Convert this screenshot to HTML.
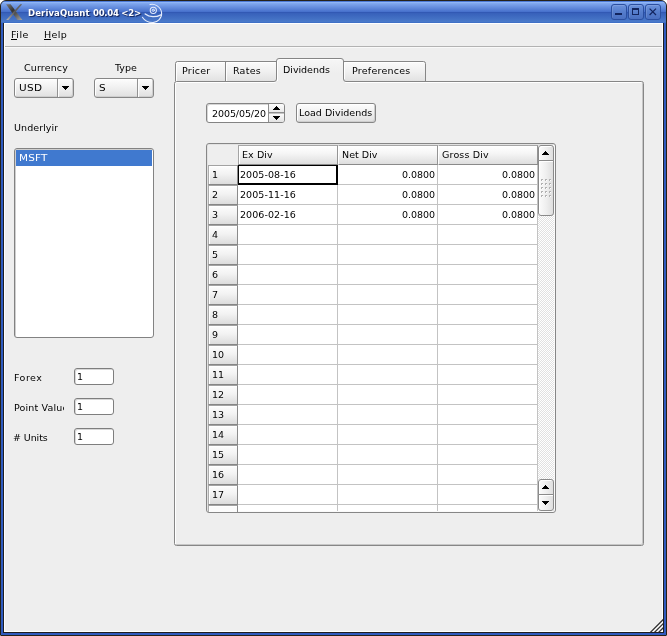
<!DOCTYPE html>
<html>
<head>
<meta charset="utf-8">
<title>DerivaQuant 00.04</title>
<style>
html,body{margin:0;padding:0;background:#fff;}
body{width:667px;height:636px;position:relative;overflow:hidden;will-change:transform;font-family:"DejaVu Sans","Liberation Sans",sans-serif;font-size:10px;color:#000;}
.a{position:absolute;}
.t{position:absolute;white-space:nowrap;line-height:12px;height:12px;font-size:9.5px;}
.tb{font-weight:bold;font-family:"DejaVu Sans Condensed","DejaVu Sans","Liberation Sans",sans-serif;}
#win{position:absolute;left:0;top:0;width:665px;height:634px;border:1px solid #26221a;border-radius:6px 6px 1px 1px;background:#2f5bbf;overflow:hidden;}
#title{position:absolute;left:0;top:0;width:665px;height:22px;background:linear-gradient(to bottom,#4c7ad6 0px,#4c7ad6 1px,#8fb5f6 1px,#8fb5f6 2px,#83aaf0 2px,#456fcb 11px,#3259b4 11px,#3259b4 12px,#3760ba 12px,#4a7aca 21px,#3f70c6 21px,#3f70c6 22px);}
#inner{position:absolute;left:2px;top:22px;width:659px;height:609px;border:1px solid #1e1e22;border-top:none;background:#fff;}
#client{position:absolute;left:1px;top:1px;width:657px;height:607px;background:#eeeeee;}
.wb{position:absolute;top:3px;width:14px;height:14px;border:1px solid #2b4fa0;border-radius:3px;background:linear-gradient(to bottom,#6c92dc 0,#557dcc 50%,#4a70c2 100%);box-shadow:inset 1px 1px 0 rgba(255,255,255,.12);}
.btn{position:absolute;border:1px solid #868686;border-radius:3px;background:linear-gradient(to bottom,#fdfdfd 0,#f1f1f1 45%,#e0e0e0 100%);box-shadow:inset 1px 1px 0 #fff,inset -1px -1px 0 #cecece;}
.dv{position:absolute;top:0;width:1px;background:#929292;}
.dvw{position:absolute;top:0;width:1px;background:#fdfdfd;}
.edit{position:absolute;width:38px;height:15px;border:1px solid #7e7e7e;border-radius:3px;background:#fff;box-shadow:inset 1px 1px 0 #d8d8d8;}
.tabf{position:absolute;top:62px;height:19px;background:linear-gradient(to bottom,#fafafa 0,#f0f0f0 50%,#e2e2e2 100%);}
.hc{position:absolute;top:145px;height:18px;width:98px;border-top:1px solid #a6a6a6;border-bottom:1px solid #8a8a8a;border-right:1px solid #949494;border-left:1px solid #fff;background:linear-gradient(to bottom,#ffffff 0,#f6f6f6 40%,#dedede 100%);box-shadow:inset 0 1px 0 #fff;}
.rh{position:absolute;left:208px;width:28px;height:18px;border-top:1px solid #a2a2a2;border-left:1px solid #acacac;border-bottom:1px solid #868686;border-right:1px solid #8a8a8a;background:linear-gradient(to bottom,#fdfdfd 0,#f2f2f2 45%,#dcdcdc 100%);box-shadow:inset 1px 1px 0 #fff;}
.gl{position:absolute;background:#c3c3c3;}
.sb{position:absolute;left:538px;width:14px;border:1px solid #8a8a8a;border-radius:3px;background:linear-gradient(to right,#fbfbfb 0,#efefef 50%,#dfdfdf 100%);box-shadow:inset 1px 1px 0 #fff;}
</style>
</head>
<body>
<div id="win">
 <div id="title"></div>
 <svg class="a" style="left:4px;top:2px" width="20" height="19" viewBox="0 0 20 19">
  <defs><linearGradient id="xg" x1="0" y1="0" x2="1" y2="1"><stop offset="0" stop-color="#7c7c7c"/><stop offset="0.4" stop-color="#353535"/><stop offset="0.62" stop-color="#585858"/><stop offset="1" stop-color="#a4a4a4"/></linearGradient>
  <linearGradient id="xg2" x1="0" y1="1" x2="1" y2="0"><stop offset="0" stop-color="#b4b4b4"/><stop offset="0.5" stop-color="#5a5a5a"/><stop offset="1" stop-color="#666"/></linearGradient></defs>
  <polygon points="1.0,1.2 5.6,1.2 17.4,16.9 12.4,16.9" fill="url(#xg)"/>
  <polygon points="15.2,1.2 17.2,1.2 3.6,16.9 1.2,16.9" fill="url(#xg2)"/>
 </svg>
 <svg class="a" style="left:139px;top:-1px" width="28" height="26" viewBox="0 0 28 26" fill="none" stroke="#e4ebfb" stroke-linecap="round">
  <circle cx="13.3" cy="10.3" r="1.1" stroke-width="1"/>
  <circle cx="13.3" cy="10.3" r="3.1" stroke-width="1.05"/>
  <path d="M10 4.6 C14.5 3.4 20.8 6.4 21.6 12.6 C22.2 18 17.6 22.8 12.6 22.6 C7.8 22.4 4.2 20 2.4 17.2" stroke-width="1.05"/>
  <path d="M5.2 14 C9.5 17.4 16 17.2 21 14.8" stroke-width="1.45"/>
 </svg>
 <div class="wb" style="left:610px"><div class="a" style="left:3px;top:8px;width:7px;height:2px;background:#13255f"></div></div>
 <div class="wb" style="left:627px"><div class="a" style="left:3px;top:3px;width:5px;height:4px;border:1px solid #13255f;border-top-width:2px"></div></div>
 <div class="wb" style="left:644px"><svg class="a" style="left:3px;top:3px" width="8" height="8" viewBox="0 0 8 8"><path d="M0.6 0.6 L7 7 M7 0.6 L0.6 7" stroke="#13255f" stroke-width="1.25"/></svg></div>
 <div id="inner"><div id="client"></div></div>
</div>
<!-- resize grip -->
<svg class="a" style="left:649px;top:618px" width="14" height="14" viewBox="0 0 14 14">
 <polygon points="0.2,14 14,0.2 14,14" fill="#fff"/>
 <g stroke="#343434" stroke-width="1.35"><path d="M0.8 15 L15 0.8 M4.9 15 L15 4.9 M9 15 L15 9"/></g>
</svg>
<!-- menubar separator -->
<div class="a" style="left:5px;top:46px;width:657px;height:1px;background:#b2b2b2"></div>
<div class="a" style="left:5px;top:47px;width:657px;height:1px;background:#f9f9f9"></div>

<div class="a" style="left:11px;top:39px;width:6px;height:1px;background:#000"></div>
<div class="a" style="left:44px;top:39px;width:7px;height:1px;background:#000"></div>
<!-- combo boxes -->
<div class="btn" style="left:14px;top:78px;width:58px;height:18px"><div class="dv" style="left:42px;height:18px"></div><div class="dvw" style="left:43px;height:18px"></div>
 <svg class="a" style="left:47px;top:7px" width="7" height="4" viewBox="0 0 7 4" shape-rendering="crispEdges"><path d="M0 0H7V1H6V2H5V3H4V4H3V3H2V2H1V1H0Z" fill="#000"/></svg></div>
<div class="btn" style="left:94px;top:78px;width:58px;height:18px"><div class="dv" style="left:42px;height:18px"></div><div class="dvw" style="left:43px;height:18px"></div>
 <svg class="a" style="left:47px;top:7px" width="7" height="4" viewBox="0 0 7 4" shape-rendering="crispEdges"><path d="M0 0H7V1H6V2H5V3H4V4H3V3H2V2H1V1H0Z" fill="#000"/></svg></div>

<!-- list box -->
<div class="a" style="left:14px;top:148px;width:138px;height:188px;border:1px solid #828282;border-radius:3px;background:#fff;box-shadow:inset 1px 1px 0 #cfcfcf">
 <div class="a" style="left:1px;top:1px;width:136px;height:16px;background:#4079cf"></div>
</div>

<!-- line edits -->
<div class="edit" style="left:74px;top:368px"></div>
<div class="edit" style="left:74px;top:398px"></div>
<div class="edit" style="left:74px;top:428px"></div>

<!-- tab fills -->
<div class="tabf" style="left:176px;width:49px;border-radius:2px 0 0 0"></div>
<div class="tabf" style="left:226px;width:50px"></div>
<div class="tabf" style="left:344px;width:81px;border-radius:0 2px 0 0"></div>
<div class="a" style="left:277px;top:59px;width:66px;height:24px;background:linear-gradient(to bottom,#f6f6f6 0,#eeeeee 60%)"></div>
<svg class="a" style="left:0;top:0" width="667" height="636" viewBox="0 0 667 636" fill="none">
 <g stroke="#fff" stroke-width="1">
  <path d="M177 62.5 H225 M227 62.5 H275 M345 62.5 H423 M176.5 63 V81 M226.5 63 V81 M344.5 63 V79"/>
  <path d="M277.5 81 V61.5 Q277.5 59.5 279.5 59.5 H341"/>
  <path d="M175.5 544 V83.5 Q175.5 82.5 176.5 82.5 H275.5 M345 82.5 H641"/>
 </g>
 <path d="M642.5 83 V543 Q642.5 544.5 641 544.5 H176" stroke="#c6c6c6" stroke-width="1"/>
 <g stroke="#868686" stroke-width="1">
  <path d="M175.5 81 V63.5 Q175.5 61.5 177.5 61.5 H276 M225.5 62 V81 M344 61.5 H423.5 Q425.5 61.5 425.5 63.5 V81"/>
  <path d="M174.5 543.5 V83.5 Q174.5 81.5 176.5 81.5 H274 Q276.5 81.5 276.5 79 V61 Q276.5 58.5 279 58.5 H341 Q343.5 58.5 343.5 61 V79 Q343.5 81.5 346 81.5 H641.5 Q643.5 81.5 643.5 83.5 V543.5 Q643.5 545.5 641.5 545.5 H176.5 Q174.5 545.5 174.5 543.5 Z"/>
 </g>
</svg>

<!-- spin box -->
<div class="a" style="left:206px;top:103px;width:77px;height:18px;border:1px solid #848484;border-radius:3px;background:#fff;overflow:hidden;box-shadow:inset 1px 1px 0 #d6d6d6">
 <div class="a" style="left:62px;top:0;width:15px;height:9px;background:linear-gradient(to bottom,#fdfdfd,#e6e6e6)"></div>
 <div class="a" style="left:62px;top:10px;width:15px;height:8px;background:linear-gradient(to bottom,#fbfbfb,#e2e2e2)"></div>
 <div class="a" style="left:61px;top:0;width:1px;height:18px;background:#8e8e8e"></div>
 <div class="a" style="left:62px;top:8px;width:15px;height:1px;background:#8e8e8e"></div>
 <div class="a" style="left:62px;top:9px;width:15px;height:1px;background:#c4c4c4"></div>
 <svg class="a" style="left:66px;top:2px" width="7" height="4" viewBox="0 0 7 4" shape-rendering="crispEdges"><path d="M3 0H4V1H5V2H6V3H7V4H0V3H1V2H2V1H3Z" fill="#000"/></svg>
 <svg class="a" style="left:66px;top:12px" width="7" height="4" viewBox="0 0 7 4" shape-rendering="crispEdges"><path d="M0 0H7V1H6V2H5V3H4V4H3V3H2V2H1V1H0Z" fill="#000"/></svg>
</div>
<!-- push button -->
<div class="btn" style="left:296px;top:103px;width:78px;height:18px"></div>

<!-- table frame -->
<div class="a" style="left:206px;top:143px;width:348px;height:368px;border:1px solid #868686;border-radius:3px;background:#fff;box-shadow:inset 1px 1px 0 #e2e2e2,inset -1px -1px 0 #fafafa"></div>
<div class="a" style="left:208px;top:145px;width:30px;height:20px;background:#eeeeee"></div>
<div class="hc" style="left:238px;border-left-color:#a4a4a4;box-shadow:inset 1px 1px 0 #fff"></div>
<div class="hc" style="left:338px"></div>
<div class="hc" style="left:438px"></div>
<div class="a" style="left:538px;top:145px;width:16px;height:366px;background:repeating-conic-gradient(#ffffff 0 25%,#e1e1e1 0 50%) 0 0/2px 2px"></div>
<div class="gl" style="left:337px;top:165px;width:1px;height:346px"></div>
<div class="gl" style="left:437px;top:165px;width:1px;height:346px"></div>
<div class="gl" style="left:537px;top:165px;width:1px;height:346px"></div>
<div class="gl" style="left:238px;top:184px;width:300px;height:1px"></div>
<div class="rh" style="top:165px"></div>
<div class="gl" style="left:238px;top:204px;width:300px;height:1px"></div>
<div class="rh" style="top:185px"></div>
<div class="gl" style="left:238px;top:224px;width:300px;height:1px"></div>
<div class="rh" style="top:205px"></div>
<div class="gl" style="left:238px;top:244px;width:300px;height:1px"></div>
<div class="rh" style="top:225px"></div>
<div class="gl" style="left:238px;top:264px;width:300px;height:1px"></div>
<div class="rh" style="top:245px"></div>
<div class="gl" style="left:238px;top:284px;width:300px;height:1px"></div>
<div class="rh" style="top:265px"></div>
<div class="gl" style="left:238px;top:304px;width:300px;height:1px"></div>
<div class="rh" style="top:285px"></div>
<div class="gl" style="left:238px;top:324px;width:300px;height:1px"></div>
<div class="rh" style="top:305px"></div>
<div class="gl" style="left:238px;top:344px;width:300px;height:1px"></div>
<div class="rh" style="top:325px"></div>
<div class="gl" style="left:238px;top:364px;width:300px;height:1px"></div>
<div class="rh" style="top:345px"></div>
<div class="gl" style="left:238px;top:384px;width:300px;height:1px"></div>
<div class="rh" style="top:365px"></div>
<div class="gl" style="left:238px;top:404px;width:300px;height:1px"></div>
<div class="rh" style="top:385px"></div>
<div class="gl" style="left:238px;top:424px;width:300px;height:1px"></div>
<div class="rh" style="top:405px"></div>
<div class="gl" style="left:238px;top:444px;width:300px;height:1px"></div>
<div class="rh" style="top:425px"></div>
<div class="gl" style="left:238px;top:464px;width:300px;height:1px"></div>
<div class="rh" style="top:445px"></div>
<div class="gl" style="left:238px;top:484px;width:300px;height:1px"></div>
<div class="rh" style="top:465px"></div>
<div class="gl" style="left:238px;top:504px;width:300px;height:1px"></div>
<div class="rh" style="top:485px"></div>
<div class="rh" style="top:505px;height:6px;border-bottom:none;background:#fbfbfb"></div>
<div class="a" style="left:238px;top:165px;width:97px;height:17px;border:solid #000;border-width:1px 2px 2px 1px"></div>
<div class="sb" style="top:160px;height:54px;border-radius:0 0 3px 3px"><div class="a" style="left:2px;top:18px;width:2px;height:2px;background:#b2b2b2"></div><div class="a" style="left:3px;top:19px;width:1px;height:1px;background:#fff"></div><div class="a" style="left:2px;top:22px;width:2px;height:2px;background:#b2b2b2"></div><div class="a" style="left:3px;top:23px;width:1px;height:1px;background:#fff"></div><div class="a" style="left:2px;top:26px;width:2px;height:2px;background:#b2b2b2"></div><div class="a" style="left:3px;top:27px;width:1px;height:1px;background:#fff"></div><div class="a" style="left:2px;top:30px;width:2px;height:2px;background:#b2b2b2"></div><div class="a" style="left:3px;top:31px;width:1px;height:1px;background:#fff"></div><div class="a" style="left:2px;top:34px;width:2px;height:2px;background:#b2b2b2"></div><div class="a" style="left:3px;top:35px;width:1px;height:1px;background:#fff"></div><div class="a" style="left:6px;top:18px;width:2px;height:2px;background:#b2b2b2"></div><div class="a" style="left:7px;top:19px;width:1px;height:1px;background:#fff"></div><div class="a" style="left:6px;top:22px;width:2px;height:2px;background:#b2b2b2"></div><div class="a" style="left:7px;top:23px;width:1px;height:1px;background:#fff"></div><div class="a" style="left:6px;top:26px;width:2px;height:2px;background:#b2b2b2"></div><div class="a" style="left:7px;top:27px;width:1px;height:1px;background:#fff"></div><div class="a" style="left:6px;top:30px;width:2px;height:2px;background:#b2b2b2"></div><div class="a" style="left:7px;top:31px;width:1px;height:1px;background:#fff"></div><div class="a" style="left:6px;top:34px;width:2px;height:2px;background:#b2b2b2"></div><div class="a" style="left:7px;top:35px;width:1px;height:1px;background:#fff"></div><div class="a" style="left:10px;top:18px;width:2px;height:2px;background:#b2b2b2"></div><div class="a" style="left:11px;top:19px;width:1px;height:1px;background:#fff"></div><div class="a" style="left:10px;top:22px;width:2px;height:2px;background:#b2b2b2"></div><div class="a" style="left:11px;top:23px;width:1px;height:1px;background:#fff"></div><div class="a" style="left:10px;top:26px;width:2px;height:2px;background:#b2b2b2"></div><div class="a" style="left:11px;top:27px;width:1px;height:1px;background:#fff"></div><div class="a" style="left:10px;top:30px;width:2px;height:2px;background:#b2b2b2"></div><div class="a" style="left:11px;top:31px;width:1px;height:1px;background:#fff"></div><div class="a" style="left:10px;top:34px;width:2px;height:2px;background:#b2b2b2"></div><div class="a" style="left:11px;top:35px;width:1px;height:1px;background:#fff"></div></div>
<div class="sb" style="top:145px;height:14px;border-radius:3px 3px 0 0"><svg class="a" style="left:3px;top:5px" width="7" height="4" viewBox="0 0 7 4" shape-rendering="crispEdges"><path d="M3 0H4V1H5V2H6V3H7V4H0V3H1V2H2V1H3Z" fill="#000"/></svg></div>
<div class="sb" style="top:494px;height:15px;border-radius:0 0 3px 3px"><svg class="a" style="left:3px;top:6px" width="7" height="4" viewBox="0 0 7 4" shape-rendering="crispEdges"><path d="M0 0H7V1H6V2H5V3H4V4H3V3H2V2H1V1H0Z" fill="#000"/></svg></div>
<div class="sb" style="top:479px;height:14px;border-radius:3px 3px 0 0"><svg class="a" style="left:3px;top:5px" width="7" height="4" viewBox="0 0 7 4" shape-rendering="crispEdges"><path d="M3 0H4V1H5V2H6V3H7V4H0V3H1V2H2V1H3Z" fill="#000"/></svg></div>

<!-- text labels -->
<div class="t" id="file" style="left:11px;top:29px;letter-spacing:0.486px;">File</div>
<div class="t" id="help" style="left:44px;top:29px;letter-spacing:0.382px;">Help</div>
<div class="t" id="cur" style="left:24px;top:62px;letter-spacing:0.141px;">Currency</div>
<div class="t" id="type" style="left:115px;top:62px;letter-spacing:-0.022px;">Type</div>
<div class="t" id="usd" style="left:19px;top:82px;letter-spacing:0.362px;transform:scaleX(1.1);transform-origin:0 0;">USD</div>
<div class="t" id="s" style="left:99px;top:82px;transform:scaleX(1.1);transform-origin:0 0;">S</div>
<div class="t" id="und" style="left:14px;top:122px;letter-spacing:0.078px;width:44px;overflow:hidden;">Underlying</div>
<div class="t" id="msft" style="left:19px;top:152px;letter-spacing:0.159px;transform:scaleX(1.1);transform-origin:0 0;color:#fff;">MSFT</div>
<div class="t" id="forex" style="left:14px;top:372px;letter-spacing:0.474px;">Forex</div>
<div class="t" id="pv" style="left:14px;top:402px;letter-spacing:0.155px;width:50px;overflow:hidden;">Point Value</div>
<div class="t" id="units" style="left:13px;top:432px;letter-spacing:-0.087px;"># Units</div>
<div class="t" id="e1" style="left:77px;top:371px;">1</div>
<div class="t" id="e2" style="left:77px;top:401px;">1</div>
<div class="t" id="e3" style="left:77px;top:431px;">1</div>
<div class="t" id="pricer" style="left:182px;top:65px;letter-spacing:0.230px;">Pricer</div>
<div class="t" id="rates" style="left:233px;top:65px;letter-spacing:0.230px;">Rates</div>
<div class="t" id="divs" style="left:283px;top:64px;letter-spacing:-0.027px;">Dividends</div>
<div class="t" id="prefs" style="left:352px;top:65px;letter-spacing:0.235px;">Preferences</div>
<div class="t" id="spin" style="left:212px;top:108px;letter-spacing:-0.085px;">2005/05/20</div>
<div class="t" id="load" style="left:299px;top:107px;letter-spacing:0.030px;">Load Dividends</div>
<div class="t" id="exdiv" style="left:242px;top:149px;letter-spacing:0.096px;">Ex Div</div>
<div class="t" id="netdiv" style="left:342px;top:149px;letter-spacing:0.030px;">Net Div</div>
<div class="t" id="grossdiv" style="left:442px;top:149px;letter-spacing:0.160px;">Gross Div</div>
<div class="t" id="d1" style="left:240px;top:169px;letter-spacing:0.078px;">2005-08-16</div>
<div class="t" id="d2" style="left:240px;top:189px;letter-spacing:0.078px;">2005-11-16</div>
<div class="t" id="d3" style="left:240px;top:209px;letter-spacing:0.078px;">2006-02-16</div>
<div class="t" id="n0" style="left:402px;top:169px;letter-spacing:-0.040px;">0.0800</div>
<div class="t" id="g0" style="left:502px;top:169px;letter-spacing:-0.040px;">0.0800</div>
<div class="t" id="n1" style="left:402px;top:189px;letter-spacing:-0.040px;">0.0800</div>
<div class="t" id="g1" style="left:502px;top:189px;letter-spacing:-0.040px;">0.0800</div>
<div class="t" id="n2" style="left:402px;top:209px;letter-spacing:-0.040px;">0.0800</div>
<div class="t" id="g2" style="left:502px;top:209px;letter-spacing:-0.040px;">0.0800</div>
<div class="t" id="r1" style="left:212px;top:169px;">1</div>
<div class="t" id="r2" style="left:212px;top:189px;">2</div>
<div class="t" id="r3" style="left:212px;top:209px;">3</div>
<div class="t" id="r4" style="left:212px;top:229px;">4</div>
<div class="t" id="r5" style="left:212px;top:249px;">5</div>
<div class="t" id="r6" style="left:212px;top:269px;">6</div>
<div class="t" id="r7" style="left:212px;top:289px;">7</div>
<div class="t" id="r8" style="left:212px;top:309px;">8</div>
<div class="t" id="r9" style="left:212px;top:329px;">9</div>
<div class="t" id="r10" style="left:212px;top:349px;">10</div>
<div class="t" id="r11" style="left:212px;top:369px;">11</div>
<div class="t" id="r12" style="left:212px;top:389px;">12</div>
<div class="t" id="r13" style="left:212px;top:409px;">13</div>
<div class="t" id="r14" style="left:212px;top:429px;">14</div>
<div class="t" id="r15" style="left:212px;top:449px;">15</div>
<div class="t" id="r16" style="left:212px;top:469px;">16</div>
<div class="t" id="r17" style="left:212px;top:489px;">17</div>
<div class="t tb" id="ttl" style="left:28px;top:7px;letter-spacing:0.097px;color:#fff;text-shadow:1px 1px 0 rgba(20,38,92,.8),1px 1px 1px rgba(20,38,92,.7);">DerivaQuant</div>
<div class="t tb" id="ttl2" style="left:93px;top:7px;letter-spacing:-0.280px;color:#fff;text-shadow:1px 1px 0 rgba(20,38,92,.8),1px 1px 1px rgba(20,38,92,.7);">00.04 &lt;2&gt;</div>
</body>
</html>
